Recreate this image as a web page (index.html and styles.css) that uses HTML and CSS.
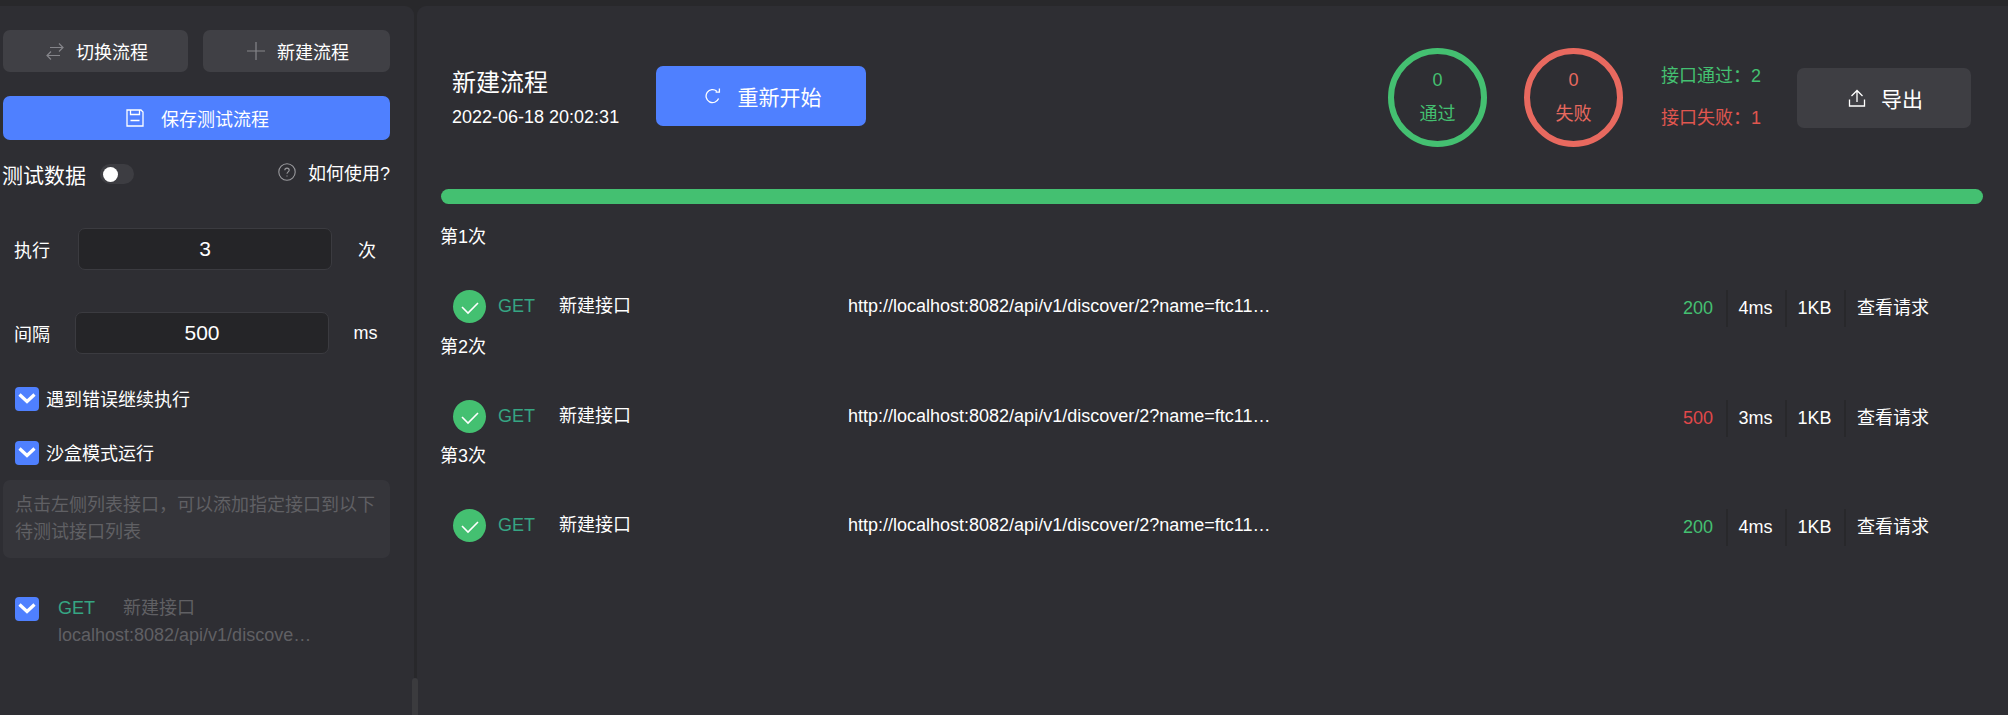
FILE: index.html
```html
<!DOCTYPE html>
<html lang="zh-CN">
<head>
    <meta charset="UTF-8">
    <title>流程测试</title>
    <link rel="stylesheet" href="styles.css">
</head>
<body>
<div class="page">

    <!-- left panel -->
    <div class="sidebar">
        <div class="top-buttons">
            <div class="btn btn-switch">
                <svg class="icon" viewBox="0 0 18 18" fill="none" stroke="#85858a" stroke-width="1.2"><path d="M4 5.5H17M13 1.5L17 5.5L13 9.5M14 13.5H1M5 9.5L1 13.5L5 17.5"/></svg>
                <span>切换流程</span>
            </div>
            <div class="btn btn-new">
                <svg class="icon" viewBox="0 0 18 18" fill="none" stroke="#85858a" stroke-width="1.2"><path d="M9 0V18M0 9H18"/></svg>
                <span>新建流程</span>
            </div>
        </div>
        <div class="btn-save">
            <svg class="icon-save" viewBox="0 0 18 18" fill="none" stroke="#fff" stroke-width="1.3"><path d="M1 1H15L17 3V17H1ZM4.5 1V5.5H13.5V1M4.5 11.5H13.5"/></svg>
            <span>保存测试流程</span>
        </div>
        <div class="data-row">
            <span class="data-title">测试数据</span>
            <span class="switch"><span class="knob"></span></span>
            <span class="help">
                <svg class="icon-help" viewBox="0 0 18 18" fill="none" stroke="#9a9a9e" stroke-width="1.1"><circle cx="9" cy="9" r="8.2"/><path d="M6.8 7.2C6.8 4.4 11.2 4.4 11.2 7.2C11.2 8.8 9 8.9 9 10.8M9 12.4V13.6"/></svg>
                如何使用?
            </span>
        </div>
        <div class="field field-run">
            <label>执行</label>
            <div class="num-input">3</div>
            <span class="unit">次</span>
        </div>
        <div class="field field-gap">
            <label>间隔</label>
            <div class="num-input">500</div>
            <span class="unit">ms</span>
        </div>
        <div class="check-row first">
            <span class="check"><svg viewBox="0 0 24 24" fill="none" stroke="#fff" stroke-width="3.2"><path d="M4.5 7.5L12 14.5L19.5 7.5"/></svg></span>
            <span class="check-text">遇到错误继续执行</span>
        </div>
        <div class="check-row second">
            <span class="check"><svg viewBox="0 0 24 24" fill="none" stroke="#fff" stroke-width="3.2"><path d="M4.5 7.5L12 14.5L19.5 7.5"/></svg></span>
            <span class="check-text">沙盒模式运行</span>
        </div>
        <div class="hint">点击左侧列表接口，可以添加指定接口到以下待测试接口列表</div>
        <div class="api-item">
            <span class="check"><svg viewBox="0 0 24 24" fill="none" stroke="#fff" stroke-width="3.2"><path d="M4.5 7.5L12 14.5L19.5 7.5"/></svg></span>
            <div class="api-info">
                <div class="api-head"><span class="api-method">GET</span><span>新建接口</span></div>
                <div class="api-url">localhost:8082/api/v1/discove…</div>
            </div>
        </div>
        <div class="scroll-thumb"></div>
    </div>

    <!-- right panel -->
    <div class="main">
        <div class="header">
            <div class="flow-info">
                <div class="flow-name">新建流程</div>
                <div class="flow-time">2022-06-18 20:02:31</div>
            </div>
            <div class="btn-restart">
                <svg class="icon-restart" viewBox="0 0 16 16" fill="none" stroke="#fff" stroke-width="1.3"><path d="M11.8 3.2A6.5 6.5 0 1 0 13.6 10.6M10.6 4.2H14.4V0.4"/></svg>
                <span>重新开始</span>
            </div>
            <div class="circle pass"><span>0</span><span>通过</span></div>
            <div class="circle fail"><span>0</span><span>失败</span></div>
            <div class="totals">
                <div class="text-pass">接口通过：2</div>
                <div class="text-fail">接口失败：1</div>
            </div>
            <div class="btn-export">
                <svg class="icon-export" viewBox="0 0 18 18" fill="none" stroke="#fff" stroke-width="1.3"><path d="M1.5 10.5V17H16.5V10.5M9 1.5V13M3.5 7L9 1.5L14.5 7"/></svg>
                <span>导出</span>
            </div>
        </div>

        <div class="progress"></div>

        <div class="run">
            <div class="run-title">第1次</div>
            <div class="result">
                <span class="ok"><svg viewBox="0 0 33 33" fill="none" stroke="#fff" stroke-width="1.6"><path d="M9 17L15 23L25 13"/></svg></span>
                <span class="method">GET</span>
                <span class="name">新建接口</span>
                <span class="url">http://localhost:8082/api/v1/discover/2?name=ftc11…</span>
                <div class="stats">
                    <span class="status text-ok">200</span>
                    <span class="cell">4ms</span>
                    <span class="cell">1KB</span>
                    <span class="cell view">查看请求</span>
                </div>
            </div>
        </div>
        <div class="run">
            <div class="run-title">第2次</div>
            <div class="result">
                <span class="ok"><svg viewBox="0 0 33 33" fill="none" stroke="#fff" stroke-width="1.6"><path d="M9 17L15 23L25 13"/></svg></span>
                <span class="method">GET</span>
                <span class="name">新建接口</span>
                <span class="url">http://localhost:8082/api/v1/discover/2?name=ftc11…</span>
                <div class="stats">
                    <span class="status text-err">500</span>
                    <span class="cell">3ms</span>
                    <span class="cell">1KB</span>
                    <span class="cell view">查看请求</span>
                </div>
            </div>
        </div>
        <div class="run">
            <div class="run-title">第3次</div>
            <div class="result">
                <span class="ok"><svg viewBox="0 0 33 33" fill="none" stroke="#fff" stroke-width="1.6"><path d="M9 17L15 23L25 13"/></svg></span>
                <span class="method">GET</span>
                <span class="name">新建接口</span>
                <span class="url">http://localhost:8082/api/v1/discover/2?name=ftc11…</span>
                <div class="stats">
                    <span class="status text-ok">200</span>
                    <span class="cell">4ms</span>
                    <span class="cell">1KB</span>
                    <span class="cell view">查看请求</span>
                </div>
            </div>
        </div>
    </div>
</div>
</body>
</html>
```

FILE: styles.css
```css
* {
    box-sizing: border-box;
}
html, body {
    height: 100%;
    margin: 0;
    overflow: hidden;
}
body {
    background-color: #28282b;
    color: #fff;
    font-family: "Liberation Sans", "Noto Sans CJK SC", sans-serif;
    font-size: 18px;
}
.page {
    display: flex;
    height: 715px;
    padding-top: 6px;
}

/* left panel */
.sidebar {
    position: relative;
    width: 414px;
    flex: none;
    padding: 24px 24px 0 3px;
    background-color: #2e2e33;
    border-radius: 0 9px 0 0;
}
.top-buttons {
    display: flex;
    justify-content: space-between;
}
.btn {
    display: flex;
    align-items: center;
    justify-content: center;
    height: 42px;
    padding-left: 3px;
    background-color: #404045;
    border-radius: 7px;
    gap: 12px;
}
.btn-switch {
    width: 185px;
}
.btn-new {
    width: 187px;
}
.icon {
    width: 18px;
    height: 18px;
}
.btn-save {
    display: flex;
    align-items: center;
    justify-content: center;
    gap: 17px;
    height: 44px;
    margin-top: 24px;
    padding-left: 2px;
    background-color: #4f80ff;
    border-radius: 7px;
}
.icon-save {
    width: 18px;
    height: 18px;
}
.data-row {
    display: flex;
    align-items: center;
    height: 30px;
    margin-top: 19px;
}
.data-title {
    margin-left: -1px;
    font-size: 21px;
}
.switch {
    width: 34px;
    height: 20px;
    margin-left: 14px;
    padding: 3px;
    background-color: #3d3d42;
    border-radius: 10px;
}
.knob {
    display: block;
    width: 15px;
    height: 15px;
    background-color: #fff;
    border-radius: 50%;
}
.help {
    display: flex;
    align-items: center;
    gap: 12px;
    margin-left: auto;
    margin-bottom: 4px;
}
.icon-help {
    width: 18px;
    height: 18px;
}
.field {
    display: flex;
    align-items: center;
    height: 42px;
}
.field label {
    margin-left: 11px;
}
.field-run {
    margin-top: 39px;
}
.field-gap {
    margin-top: 42px;
}
.num-input {
    width: 254px;
    height: 42px;
    line-height: 40px;
    text-align: center;
    font-size: 21px;
    background-color: #252528;
    border: 1px solid #3b3b40;
    border-radius: 7px;
}
.field-run .num-input {
    margin-left: 28px;
}
.field-gap .num-input {
    margin-left: 25px;
}
.unit {
    flex: 1;
    text-align: center;
    padding-left: 12px;
}
.check-row {
    display: flex;
    align-items: center;
    gap: 7px;
    padding-left: 12px;
    height: 24px;
}
.check-row.first {
    margin-top: 33px;
}
.check-row.second {
    margin-top: 30px;
}
.check-text {
    margin-bottom: 2px;
}
.check {
    display: block;
    width: 24px;
    height: 24px;
    flex: none;
    background-color: #4f80ff;
    border-radius: 4px;
}
.check svg {
    display: block;
    width: 24px;
    height: 24px;
}
.hint {
    height: 78px;
    margin-top: 15px;
    padding: 12px 12px;
    line-height: 27px;
    color: #606064;
    background-color: #35353a;
    border-radius: 7px;
}
.api-item {
    display: flex;
    gap: 19px;
    margin-top: 39px;
    padding-left: 12px;
}
.api-info {
    width: 255px;
    color: #606064;
}
.api-head {
    display: flex;
    height: 24px;
    line-height: 22px;
}
.api-method {
    width: 65px;
    color: #36a583;
}
.api-url {
    margin-top: 2px;
    line-height: 25px;
    white-space: nowrap;
}
.scroll-thumb {
    position: absolute;
    right: -4px;
    bottom: 0;
    width: 6px;
    height: 37px;
    background-color: #3b3b3e;
    border-radius: 3px 3px 0 0;
}

/* right panel */
.main {
    flex: 1;
    margin-left: 3px;
    background-color: #2e2e33;
    border-radius: 9px 0 0 0;
}
.header {
    display: flex;
    height: 99px;
    margin-top: 42px;
    padding-left: 35px;
}
.flow-info {
    width: 204px;
    padding-top: 20px;
}
.flow-name {
    font-size: 24px;
    line-height: 30px;
}
.flow-time {
    margin-top: 7px;
    line-height: 24px;
}
.btn-restart {
    display: flex;
    align-items: center;
    justify-content: center;
    gap: 17px;
    width: 210px;
    height: 60px;
    margin-top: 18px;
    padding-left: 4px;
    font-size: 21px;
    background-color: #4f80ff;
    border-radius: 7px;
}
.icon-restart {
    width: 16px;
    height: 16px;
}
.circle {
    display: flex;
    flex-direction: column;
    align-items: center;
    justify-content: center;
    gap: 8px;
    width: 99px;
    height: 99px;
    border: 6px solid;
    border-radius: 50%;
}
.circle.pass {
    margin-left: 522px;
    color: #44c071;
}
.circle.fail {
    margin-left: 37px;
    color: #e8695f;
}
.totals {
    margin-left: 38px;
    padding-top: 15px;
}
.totals div {
    line-height: 27px;
    margin-bottom: 15px;
}
.text-pass {
    color: #44c071;
}
.text-fail {
    color: #e0564f;
}
.btn-export {
    display: flex;
    align-items: center;
    justify-content: center;
    gap: 15px;
    width: 174px;
    height: 60px;
    margin-top: 20px;
    margin-left: 36px;
    padding-left: 3px;
    font-size: 21px;
    background-color: #3e3e43;
    border-radius: 7px;
}
.icon-export {
    width: 18px;
    height: 18px;
}
.progress {
    height: 15px;
    margin: 42px 25px 0 24px;
    background-color: #44c071;
    border-radius: 8px;
}
.run {
    margin-left: 24px;
    margin-right: 25px;
    margin-bottom: 5.5px;
}
.progress + .run {
    margin-top: 19px;
}
.run-title {
    margin-left: -1px;
    line-height: 29px;
    height: 27px;
}
.result {
    display: flex;
    align-items: flex-start;
    margin-top: 40px;
    height: 37px;
    padding-left: 12px;
}
.ok {
    display: block;
    width: 33px;
    height: 33px;
    flex: none;
    background-color: #44c071;
    border-radius: 50%;
}
.ok svg {
    display: block;
}
.method, .name, .url {
    line-height: 33px;
}
.method {
    width: 61px;
    margin-left: 12px;
    color: #36a583;
}
.name {
    width: 289px;
}
.url {
    width: 425px;
    white-space: nowrap;
}
.stats {
    display: flex;
    margin-left: auto;
    height: 37px;
    line-height: 37px;
}
.status {
    padding-right: 13px;
}
.text-ok {
    color: #44c071;
}
.text-err {
    color: #e0484a;
}
.cell {
    width: 59px;
    padding-right: 2px;
    text-align: center;
    border-left: 2px solid #28282b;
}
.view {
    width: 139px;
    padding-left: 11px;
    text-align: left;
}
```
